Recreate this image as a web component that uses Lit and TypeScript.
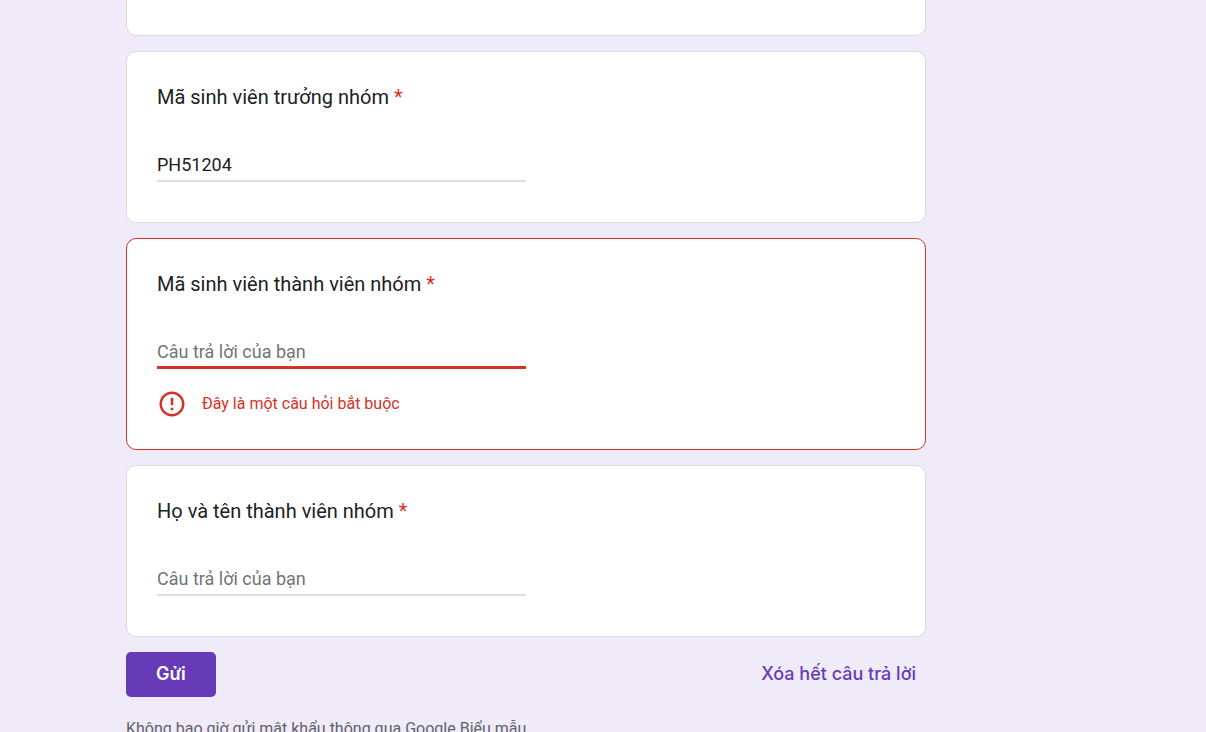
import { LitElement, html, css, nothing } from "lit";
import { customElement, property } from "lit/decorators.js";
import { classMap } from "lit/directives/class-map.js";

interface Question {
  id: string;
  title: string;
  value: string;
  error: string;
}

const QUESTIONS: Question[] = [
  { id: "leader-code", title: "Mã sinh viên trưởng nhóm", value: "PH51204", error: "" },
  { id: "member-code", title: "Mã sinh viên thành viên nhóm", value: "", error: "Đây là một câu hỏi bắt buộc" },
  { id: "member-name", title: "Họ và tên thành viên nhóm", value: "", error: "" },
];

@customElement("question-card")
export class QuestionCard extends LitElement {
  @property({ attribute: false }) question!: Question;

  static styles = css`
    :host {
      display: block;
    }
    .card {
      padding: 30px;
      background: #fff;
      border: 1px solid #dadce0;
      border-radius: 10px;
    }
    .card.invalid {
      border-color: #d93025;
    }
    .title {
      display: block;
      margin-bottom: 38px;
      font-size: 20px;
      line-height: 30px;
      color: #202124;
    }
    .star {
      color: #d93025;
    }
    .answer {
      display: block;
      box-sizing: border-box;
      width: 50%;
      height: 32px;
      margin: 0 0 10px;
      padding: 0 0 4px;
      border: 0;
      outline: 0;
      background: transparent;
      box-shadow: inset 0 -2px #dfdfe0;
      font: inherit;
      font-size: 18px;
      color: #202124;
    }
    .answer::placeholder {
      color: #70757a;
      opacity: 1;
    }
    .invalid .answer {
      box-shadow: inset 0 -3px #d93025;
    }
    .error {
      display: flex;
      align-items: center;
      gap: 15px;
      margin-top: 20px;
      font-size: 16px;
      line-height: 20px;
      color: #d93025;
    }
    .icon {
      width: 30px;
      height: 30px;
      fill: currentColor;
    }
  `;

  render() {
    const { id, title, value, error } = this.question;
    return html`
      <div class=${classMap({ card: true, invalid: error !== "" })}>
        <label class="title" for=${id}>${title} <span class="star">*</span></label>
        <input
          class="answer"
          id=${id}
          type="text"
          placeholder="Câu trả lời của bạn"
          required
          .value=${value}
        />
        ${error
          ? html`<div class="error" role="alert">
              <svg class="icon" viewBox="0 0 24 24" aria-hidden="true">
                <path
                  d="M11 15h2v2h-2zm0-8h2v6h-2zm.99-5C6.47 2 2 6.48 2 12s4.47 10 9.99 10C17.52 22 22 17.52 22 12S17.52 2 11.99 2zM12 20c-4.42 0-8-3.58-8-8s3.58-8 8-8 8 3.58 8 8-3.58 8-8 8z"
                />
              </svg>
              <span>${error}</span>
            </div>`
          : nothing}
      </div>
    `;
  }
}

@customElement("app-root")
export class AppRoot extends LitElement {
  static styles = css`
    :host {
      display: block;
      height: 100vh;
      overflow: hidden;
      background: #f0ebf8;
      font-family: Roboto, "Noto Sans", sans-serif;
    }
    .form {
      display: flex;
      flex-direction: column;
      gap: 15px;
      max-width: 800px;
      margin-left: 126px;
    }
    .previous {
      height: 35px;
      background: #fff;
      border: 1px solid #dadce0;
      border-top: 0;
      border-radius: 0 0 10px 10px;
    }
    .actions {
      display: flex;
      align-items: center;
      justify-content: space-between;
    }
    .submit,
    .clear {
      height: 45px;
      border: 0;
      border-radius: 5px;
      font-family: Inter, Roboto, sans-serif;
      font-size: 18px;
      font-weight: 500;
      cursor: pointer;
    }
    .submit {
      padding: 0 30px 2px;
      background: #673ab7;
      color: #fff;
      font-weight: 600;
    }
    .clear {
      padding: 0 10px 2px;
      background: transparent;
      color: #673ab7;
    }
    .notice {
      margin: 7px 0 0;
      font-size: 16px;
      line-height: 20px;
      color: #5f6368;
    }
  `;

  render() {
    return html`
      <form class="form" novalidate>
        <div class="previous"></div>
        ${QUESTIONS.map((question) => html`<question-card .question=${question}></question-card>`)}
        <div class="actions">
          <button class="submit" type="button">Gửi</button>
          <button class="clear" type="reset">Xóa hết câu trả lời</button>
        </div>
        <p class="notice">Không bao giờ gửi mật khẩu thông qua Google Biểu mẫu.</p>
      </form>
    `;
  }
}
